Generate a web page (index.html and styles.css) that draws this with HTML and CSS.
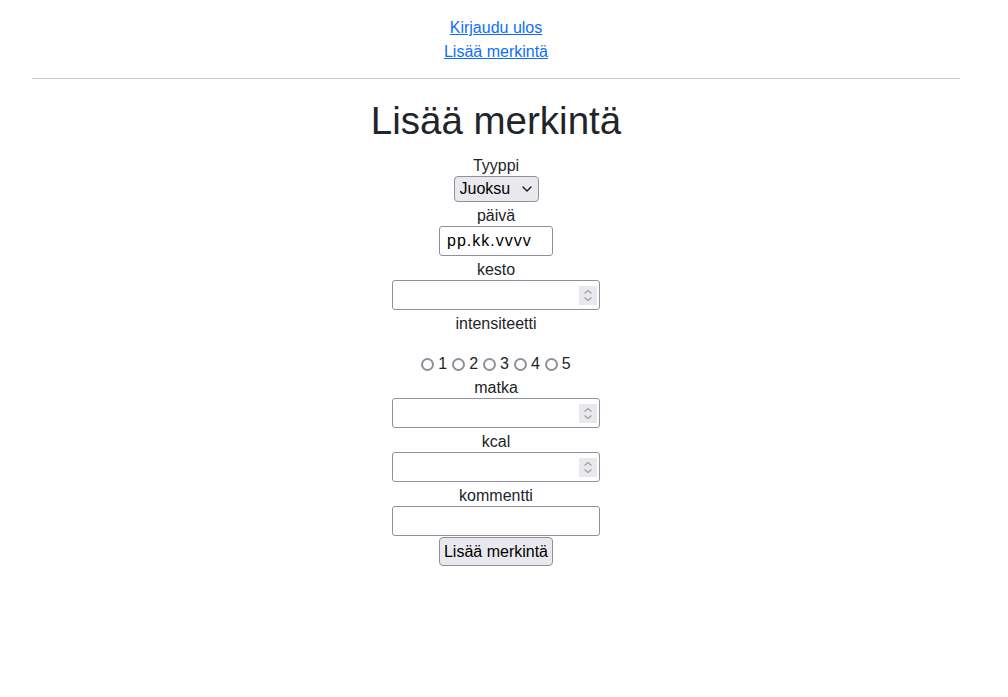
FILE: index.html
```html
<!DOCTYPE html>
<html lang="fi">
<head>
<meta charset="utf-8">
<title>Lisää merkintä</title>
<link rel="stylesheet" href="styles.css">
</head>
<body>
<div class="page">
  <nav class="nav">
    <a href="#">Kirjaudu ulos</a>
    <a href="#">Lisää merkintä</a>
  </nav>
  <hr class="divider">
  <h1 class="title">Lisää merkintä</h1>
  <form class="entry">
    <label class="field-label" for="tyyppi">Tyyppi</label>
    <span class="select-box">
      <select id="tyyppi" class="select">
        <option>Juoksu</option>
        <option>Kävely</option>
        <option>Pyöräily</option>
      </select>
      <svg class="chevron" width="10" height="6" viewBox="0 0 10 6"><path d="M1 1 L5 5 L9 1" fill="none" stroke="#1a1a1a" stroke-width="1.4" stroke-linecap="round" stroke-linejoin="round"/></svg>
    </span>
    <label class="field-label" for="paiva">päivä</label>
    <input id="paiva" class="date-input" type="text" placeholder="pp.kk.vvvv">
    <label class="field-label" for="kesto">kesto</label>
    <span class="num-box">
      <input id="kesto" class="num-input" type="number">
      <span class="spinner"><svg width="18" height="19" viewBox="0 0 18 19"><path d="M5.5 7.5 L9 4.5 L12.5 7.5 M5.5 11.5 L9 14.5 L12.5 11.5" fill="none" stroke="#9a9aa2" stroke-width="1.1"/></svg></span>
    </span>
    <span class="field-label">intensiteetti</span>
    <div class="radios">
      <label class="opt"><input type="radio" name="int" class="radio">1</label>
      <label class="opt"><input type="radio" name="int" class="radio">2</label>
      <label class="opt"><input type="radio" name="int" class="radio">3</label>
      <label class="opt"><input type="radio" name="int" class="radio">4</label>
      <label class="opt"><input type="radio" name="int" class="radio">5</label>
    </div>
    <label class="field-label" for="matka">matka</label>
    <span class="num-box">
      <input id="matka" class="num-input" type="number">
      <span class="spinner"><svg width="18" height="19" viewBox="0 0 18 19"><path d="M5.5 7.5 L9 4.5 L12.5 7.5 M5.5 11.5 L9 14.5 L12.5 11.5" fill="none" stroke="#9a9aa2" stroke-width="1.1"/></svg></span>
    </span>
    <label class="field-label" for="kcal">kcal</label>
    <span class="num-box">
      <input id="kcal" class="num-input" type="number">
      <span class="spinner"><svg width="18" height="19" viewBox="0 0 18 19"><path d="M5.5 7.5 L9 4.5 L12.5 7.5 M5.5 11.5 L9 14.5 L12.5 11.5" fill="none" stroke="#9a9aa2" stroke-width="1.1"/></svg></span>
    </span>
    <label class="field-label" for="kommentti">kommentti</label>
    <input id="kommentti" class="text-input" type="text">
    <button type="button" class="submit">Lisää merkintä</button>
  </form>
</div>
</body>
</html>
```
FILE: styles.css
```css
* { box-sizing: border-box; }

body {
  margin: 0;
  font-family: "Segoe UI", "Liberation Sans", Arial, sans-serif;
  font-size: 16px;
  line-height: 1.5;
  color: #212529;
  background: #fff;
}

.page {
  margin-left: 32px;
  width: 928px;
  padding-top: 16px;
}

.nav {
  display: flex;
  flex-direction: column;
  align-items: center;
}

.nav a {
  color: #0d6efd;
  text-decoration: underline;
}

.divider {
  margin: 14px 0 16px;
  height: 0;
  border: 0;
  border-top: 1px solid #c8c9ca;
}

.title {
  margin: 0 0 9px;
  height: 48px;
  padding-top: 2px;
  font-size: 38.5px;
  font-weight: 400;
  line-height: 48px;
  text-align: center;
}

.entry {
  display: flex;
  flex-direction: column;
  align-items: center;
}

.field-label {
  display: block;
  height: 24px;
  padding-top: 2px;
  line-height: 24px;
}

.select-box {
  display: inline-flex;
  align-items: center;
  width: 85px;
  height: 26px;
  border: 1px solid #8f8f9d;
  border-radius: 4px;
  background: #e9e9ed;
  padding: 0 6px 0 5px;
}

.select {
  appearance: none;
  -webkit-appearance: none;
  flex: 1;
  min-width: 0;
  border: 0;
  background: transparent;
  font: inherit;
  color: #000;
  padding: 0;
  outline: none;
}

.chevron {
  flex: none;
}

.date-input {
  width: 114px;
  height: 30px;
  border: 1px solid #8f8f9d;
  border-radius: 3px;
  padding: 0 0 0 7px;
  font: inherit;
  letter-spacing: 1px;
  color: #000;
  background: #fff;
}

.date-input::placeholder {
  color: #000;
  opacity: 1;
}

.num-box {
  display: inline-flex;
  align-items: center;
  width: 208px;
  height: 30px;
  border: 1px solid #8f8f9d;
  border-radius: 3px;
  padding: 0 2px 0 0;
  background: #fff;
}

.num-input {
  flex: 1;
  min-width: 0;
  height: 100%;
  border: 0;
  padding: 0 6px;
  font: inherit;
  background: transparent;
  outline: none;
  appearance: textfield;
  -moz-appearance: textfield;
}

.num-input::-webkit-inner-spin-button,
.num-input::-webkit-outer-spin-button {
  -webkit-appearance: none;
  margin: 0;
}

.spinner {
  display: flex;
  width: 18px;
  height: 19px;
  background: #e9e9ed;
}

.radios {
  display: flex;
  gap: 5px;
  height: 23px;
  margin-top: 17px;
  padding-top: 2px;
  align-items: center;
}

.opt {
  display: inline-flex;
  align-items: center;
  line-height: 24px;
}

.radio {
  appearance: none;
  -webkit-appearance: none;
  width: 13px;
  height: 13px;
  margin: 1px 4px 0 0;
  border: 2px solid #8f8f9d;
  border-radius: 50%;
  background: #fff;
}

.text-input {
  width: 208px;
  height: 30px;
  border: 1px solid #8f8f9d;
  border-radius: 3px;
  padding: 0 6px;
  font: inherit;
  background: #fff;
}

.submit {
  margin-top: 1px;
  height: 29px;
  padding: 0 4px;
  border: 1px solid #8f8f9d;
  border-radius: 4px;
  background: #e9e9ed;
  font: inherit;
  color: #000;
}
```
